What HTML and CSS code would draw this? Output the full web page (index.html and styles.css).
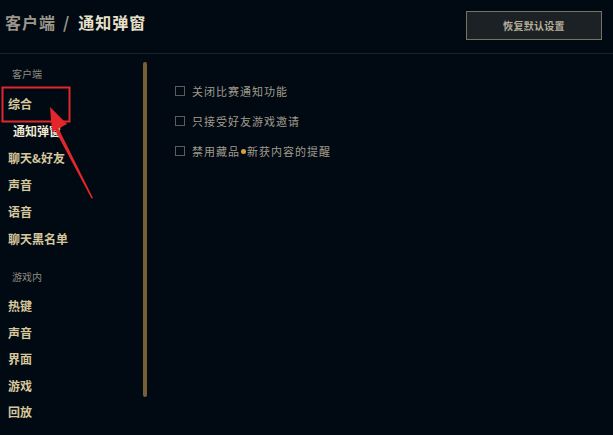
FILE: index.html
```html
<!DOCTYPE html>
<html lang="zh-CN">
<head>
<meta charset="utf-8">
<title>设置</title>
<link rel="stylesheet" href="styles.css">
</head>
<body>
<div class="page">
  <header class="header">
    <h1 class="title"><span class="crumb">客户端</span><span class="sep">/</span><span class="current">通知弹窗</span></h1>
    <button class="reset">恢复默认设置</button>
  </header>
  <div class="main">
    <nav class="sidebar">
      <div class="group-label">客户端</div>
      <div class="item">综合</div>
      <div class="item sub active">通知弹窗</div>
      <div class="item">聊天&amp;好友</div>
      <div class="item">声音</div>
      <div class="item">语音</div>
      <div class="item">聊天黑名单</div>
      <div class="group-label second">游戏内</div>
      <div class="item tight">热键</div>
      <div class="item tight">声音</div>
      <div class="item tight">界面</div>
      <div class="item tight">游戏</div>
      <div class="item tight">回放</div>
    </nav>
    <div class="scrollbar"></div>
    <section class="content">
      <label class="option"><span class="box"></span><span class="text">关闭比赛通知功能</span></label>
      <label class="option"><span class="box"></span><span class="text">只接受好友游戏邀请</span></label>
      <label class="option"><span class="box"></span><span class="text">禁用藏品<span class="dot"></span>新获内容的提醒</span></label>
    </section>
  </div>
  <svg class="annotation" width="613" height="435" viewBox="0 0 613 435">
    <rect x="2.5" y="87.5" width="67" height="34" fill="none" stroke="#e3262c" stroke-width="2"/>
    <polygon points="93,198 91.5,198.5 55,130 58.5,128.5" fill="#e3262c"/>
    <polygon points="50,107 67,124 52,132" fill="#e3262c"/>
  </svg>
</div>
</body>
</html>
```
FILE: styles.css
```css
* { box-sizing: border-box; }
html, body {
  margin: 0;
  padding: 0;
  background: #010a13;
}
body {
  font-family: "Noto Sans CJK SC", "Noto Sans", sans-serif;
  width: 613px;
  height: 435px;
  overflow: hidden;
}
.page {
  position: relative;
  width: 613px;
  height: 435px;
}
.header {
  height: 54px;
  display: flex;
  justify-content: space-between;
  align-items: flex-start;
  padding: 11px 11px 0 5px;
  border-bottom: 1px solid #17232c;
}
.title {
  margin: 0;
  font-size: 16px;
  line-height: 22px;
  font-weight: 700;
  letter-spacing: 1px;
  display: flex;
}
.crumb { color: #9c978a; }
.sep { color: #9c978a; margin: 0 8px 0 7px; }
.current { color: #e8e0ca; }
.reset {
  width: 136px;
  height: 29px;
  background: #1c2126;
  border: 1px solid #77735f;
  color: #b5ae98;
  font-family: "Noto Sans CJK SC", sans-serif;
  font-size: 10px;
  font-weight: 700;
  letter-spacing: 0.3px;
  padding: 0;
}
.main {
  display: flex;
  align-items: flex-start;
}
.sidebar {
  width: 143px;
  padding-top: 12px;
  display: flex;
  flex-direction: column;
}
.group-label {
  height: 16px;
  line-height: 16px;
  font-size: 10px;
  color: #8d8a7f;
  padding-left: 12px;
  margin-bottom: 8px;
}
.group-label.second { margin-top: 17px; }
.item {
  height: 27px;
  line-height: 27px;
  font-size: 12px;
  font-weight: 700;
  color: #d6c79c;
  padding-left: 8px;
}
.item.tight { height: 26.5px; line-height: 26.5px; }
.item.sub { padding-left: 13px; }
.item.active { color: #f0e9d6; }
.scrollbar {
  width: 4px;
  height: 335px;
  margin-top: 8px;
  border-radius: 2px;
  background: #7a5f36;
}
.content {
  padding: 22px 0 0 28px;
  display: flex;
  flex-direction: column;
}
.option {
  height: 30px;
  display: flex;
  align-items: center;
}
.box {
  width: 10px;
  height: 10px;
  border: 1px solid #5e5c56;
  margin-right: 7px;
  flex: none;
}
.text {
  font-size: 11px;
  color: #a09b8c;
  letter-spacing: 1px;
  display: flex;
  align-items: center;
}
.dot {
  width: 5px;
  height: 5px;
  border-radius: 50%;
  background: #d8a13a;
  margin: 0 1px;
}
.annotation {
  position: absolute;
  left: 0;
  top: 0;
  pointer-events: none;
}
```
